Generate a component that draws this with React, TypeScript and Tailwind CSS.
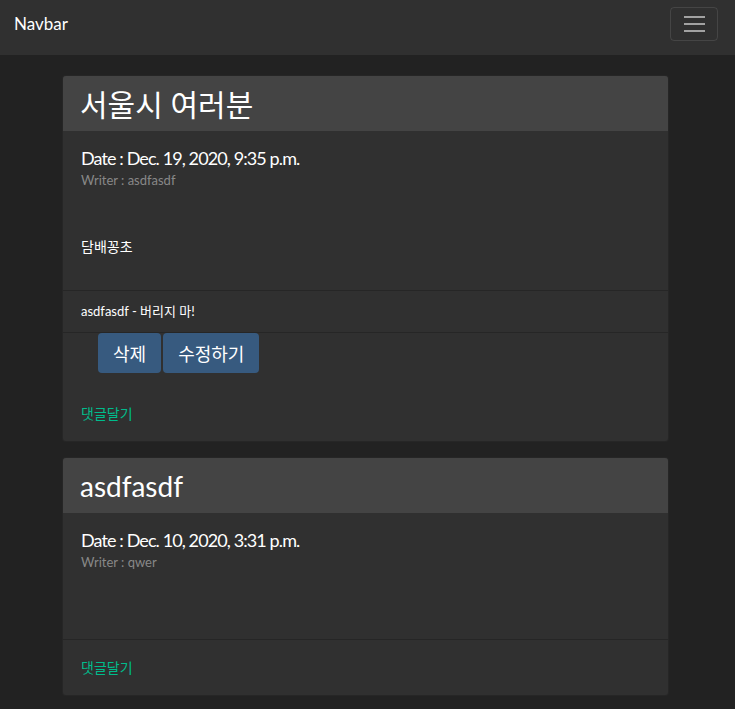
const LATO = "font-['Lato','Noto_Sans_CJK_KR',sans-serif]";
const KR = "font-['Noto_Sans_CJK_KR','Lato',sans-serif]";

type Post = {
  title: string;
  titleSize: string;
  date: string;
  writer: string;
  content?: string;
  comments: string[];
  owner: boolean;
};

const posts: Post[] = [
  {
    title: "서울시 여러분",
    titleSize: "text-[30px]",
    date: "Dec. 19, 2020, 9:35 p.m.",
    writer: "asdfasdf",
    content: "담배꽁초",
    comments: ["asdfasdf - 버리지 마!"],
    owner: true,
  },
  {
    title: "asdfasdf",
    titleSize: "text-[28px]",
    date: "Dec. 10, 2020, 3:31 p.m.",
    writer: "qwer",
    comments: [],
    owner: false,
  },
];

function Navbar() {
  return (
    <nav className="h-[55px] bg-[#303030] flex items-start justify-between pl-[14px] pr-[17px] pt-[7px]">
      <a href="#" className={`${LATO} text-[17px] leading-[34px] text-white`}>
        Navbar
      </a>
      <button className="w-[48px] h-[34px] rounded-[4px] border border-white/10 flex flex-col items-center justify-center gap-[5px]">
        <span className="block w-[21px] h-[2px] bg-white/55" />
        <span className="block w-[21px] h-[2px] bg-white/55" />
        <span className="block w-[21px] h-[2px] bg-white/55" />
      </button>
    </nav>
  );
}

function PostCard({ post }: { post: Post }) {
  return (
    <div className="w-[607px] bg-[#303030] border border-black/20 rounded-[4px] overflow-hidden">
      <div className="h-[55px] bg-[#444444] flex items-center px-[17px]">
        <h2 className={`${LATO} ${post.titleSize} text-white leading-none`}>{post.title}</h2>
      </div>
      <div className={`${LATO} px-[18px] pt-[16px] ${post.content ? "h-[159px]" : "h-[126px]"}`}>
        <h5 className="text-[18px] leading-[22px] tracking-[-0.9px] text-white">Date : {post.date}</h5>
        <div className="mt-[2px] text-[13px] leading-[19px] text-[#888888]">Writer : {post.writer}</div>
        {post.content && (
          <p className={`${KR} mt-[46px] text-[14px] leading-[20px] text-white`}>{post.content}</p>
        )}
      </div>
      {post.comments.map((c, i) => (
        <div
          key={i}
          className={`${LATO} h-[43px] border-y border-black/20 flex items-center px-[18px] text-[13px] text-white`}
        >
          {c}
        </div>
      ))}
      {post.owner && (
        <div className="flex gap-[2px] pl-[35px]">
          <button className={`${KR} h-[40px] px-[15px] bg-[#375a7f] rounded-[4px] text-[18px] text-white`}>
            삭제
          </button>
          <button className={`${KR} h-[40px] px-[15px] bg-[#375a7f] rounded-[4px] text-[18px] text-white`}>
            수정하기
          </button>
        </div>
      )}
      <div
        className={`${post.owner ? "h-[68px] pt-[12px]" : "h-[56px] border-t border-black/20"} flex items-center px-[18px]`}
      >
        <a href="#" className={`${KR} text-[14px] text-[#00bc8c]`}>
          댓글달기
        </a>
      </div>
    </div>
  );
}

export default function App() {
  return (
    <div className="min-h-[709px] bg-[#222222]">
      <Navbar />
      <main className="flex flex-col gap-[15px] pl-[62px] pt-[20px] pb-[14px]">
        {posts.map((p, i) => (
          <PostCard key={i} post={p} />
        ))}
      </main>
    </div>
  );
}
